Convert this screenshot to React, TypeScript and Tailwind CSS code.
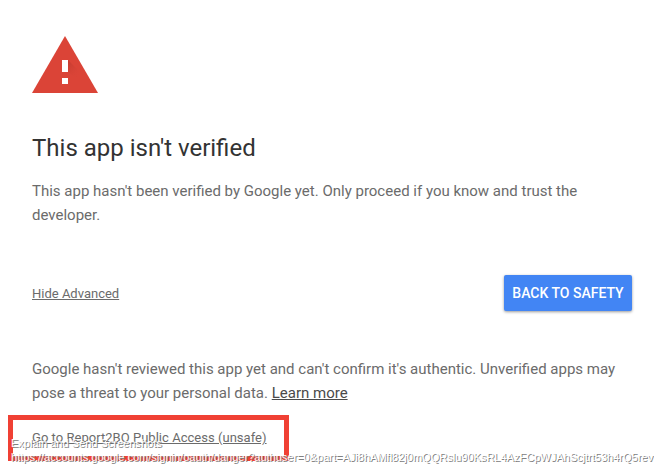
function WarningIcon() {
  return (
    <svg className="block h-[57px] w-[66px]" viewBox="0 0 66 57" aria-hidden="true">
      <defs>
        <linearGradient id="shade" x1="30" y1="24" x2="52" y2="46" gradientUnits="userSpaceOnUse">
          <stop offset="0" stopColor="#a83228" stopOpacity="0.75" />
          <stop offset="0.75" stopColor="#db4437" stopOpacity="0" />
        </linearGradient>
      </defs>
      <path d="M33 0L66 57H0Z" fill="#db4437" />
      <path d="M36 24L50 38V48L36 36ZM36 42L50 56H38L30 48Z" fill="url(#shade)" />
      <path d="M30 24h6v12h-6zM30 42h6v6h-6z" fill="#fff" />
    </svg>
  );
}

export default function App() {
  return (
    <main className="relative h-[476px] w-[654px] overflow-hidden bg-white pl-8 pt-9 font-['Roboto',sans-serif] text-[#6b6b6b]">
      <WarningIcon />
      <h1 className="mt-[39px] text-2xl leading-8 whitespace-nowrap text-[#333]">This app isn't verified</h1>
      <p className="mt-[15px] text-[15px] leading-6 whitespace-nowrap">
        This app hasn't been verified by Google yet. Only proceed if you know and trust the
        <br />
        developer.
      </p>
      <div className="mt-12 flex h-9 w-[600px] items-center justify-between">
        <a className="pt-0.5 text-[13px] leading-5 underline">Hide Advanced</a>
        <button className="h-9 w-32 rounded-xs bg-[#4285f4] text-sm font-medium whitespace-nowrap text-white shadow-[0_1px_3px_rgba(0,0,0,0.4)]">
          BACK TO SAFETY
        </button>
      </div>
      <p className="mt-[46px] text-[15px] leading-6 whitespace-nowrap">
        Google hasn't reviewed this app yet and can't confirm it's authentic. Unverified apps may
        <br />
        pose a threat to your personal data. <a className="text-[#4a4a4a] underline">Learn more</a>
      </p>
      <div className="-ml-6 mt-[10px] h-[46px] w-[281px] border-5 border-[#f04034] pl-[19px] pt-2">
        <a className="block text-[13px] leading-5 tracking-[0.03px] whitespace-nowrap underline">Go to Report2BO Public Access (unsafe)</a>
      </div>
      <div className="absolute left-[11px] top-[436px] font-['Liberation_Sans',Arial,sans-serif] text-[11px] leading-[14px] tracking-[0.01px] whitespace-nowrap text-white [text-shadow:1px_1px_0_#808080]">
        <div>Explain and Send Screenshots</div>
        <div>https://accounts.google.com/signin/oauth/danger?authuser=0&amp;part=AJi8hAMfl82j0mQQRslu90KsRL4AzFCpWJAhScjtrt53h4rQ5rev</div>
      </div>
    </main>
  );
}
